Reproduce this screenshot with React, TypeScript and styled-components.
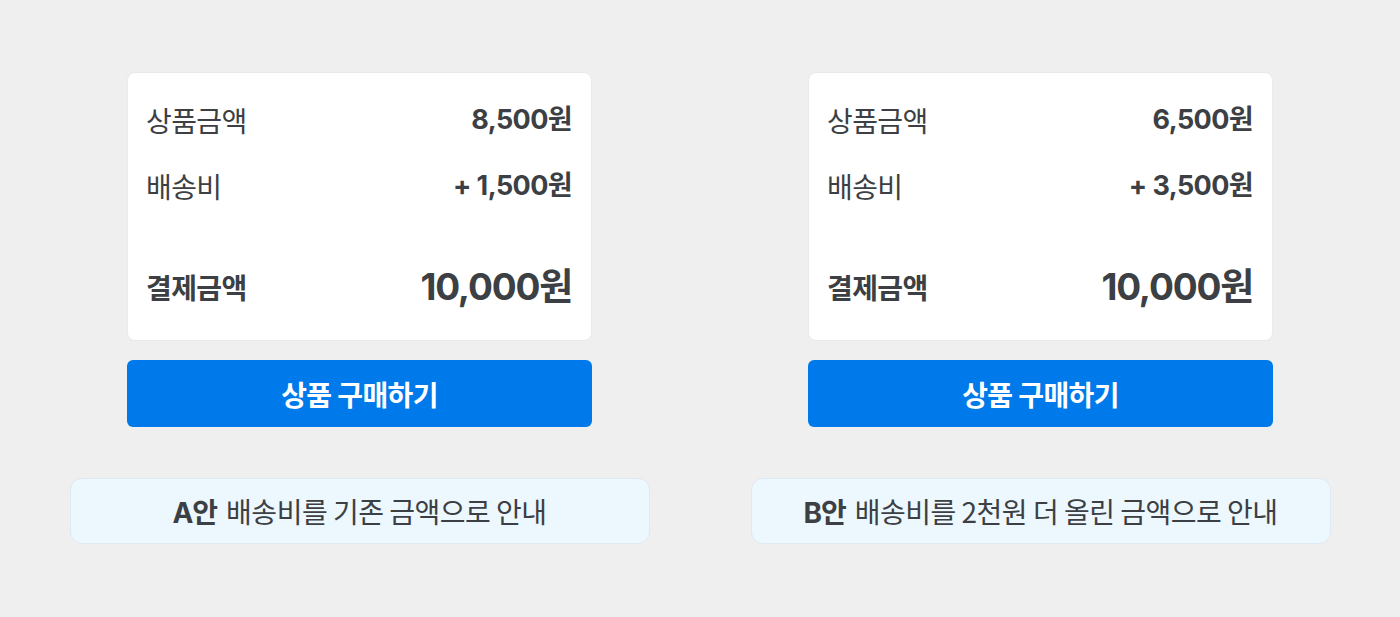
import React from "react";
import styled, { createGlobalStyle } from "styled-components";

const Global = createGlobalStyle`
  html, body { margin: 0; padding: 0; background: #efefef; }
  body { font-family: "Noto Sans CJK KR", "Noto Sans", sans-serif; }
`;

const Page = styled.div`
  width: 1400px;
  height: 617px;
  box-sizing: border-box;
  padding: 73px 19px 0;
  display: grid;
  grid-template-columns: 1fr 1fr;
  background: #efefef;
  color: #3c3f43;
`;

const Column = styled.div`
  display: flex;
  flex-direction: column;
  align-items: center;
`;

const Card = styled.div`
  width: 463px;
  height: 267px;
  box-sizing: border-box;
  background: #ffffff;
  border-radius: 7px;
  box-shadow: 0 0 0 1px #eaeaea;
  padding: 18px 19px 22px 18px;
  display: flex;
  flex-direction: column;
  gap: 6px;
`;

const Row = styled.div<{ $total?: boolean }>`
  height: 60px;
  display: flex;
  align-items: center;
  justify-content: space-between;
  margin-top: ${(p) => (p.$total ? "35px" : "0")};
`;

const Label = styled.span<{ $bold?: boolean }>`
  font-family: "Noto Sans CJK KR", sans-serif;
  font-size: 28px;
  font-weight: ${(p) => (p.$bold ? 700 : 400)};
  letter-spacing: -0.6px;
  line-height: 1;
  margin-top: -3px;
`;

const Value = styled.span<{ $big?: boolean }>`
  font-family: "Inter", "Noto Sans CJK KR", sans-serif;
  font-size: ${(p) => (p.$big ? "37px" : "27px")};
  font-weight: 700;
  letter-spacing: ${(p) => (p.$big ? "-1.2px" : "-0.6px")};
  line-height: 1;
  margin-top: -3px;
`;

const BuyButton = styled.button`
  margin-top: 20px;
  width: 465px;
  height: 67px;
  border: none;
  border-radius: 6px;
  background: #0079ea;
  color: #ffffff;
  font-family: "Noto Sans CJK KR", sans-serif;
  font-size: 28px;
  font-weight: 700;
  letter-spacing: -0.6px;
  display: flex;
  align-items: center;
  justify-content: center;
  padding: 0;
`;

const Note = styled.div`
  margin-top: 51px;
  width: 580px;
  height: 66px;
  box-sizing: border-box;
  background: #edf7fe;
  border: 1px solid #dfe9f1;
  border-radius: 12px;
  display: flex;
  align-items: center;
  justify-content: center;
  font-family: "Noto Sans CJK KR", sans-serif;
  font-size: 28px;
  letter-spacing: -0.5px;
  color: #3c3f43;
`;

const Tag = styled.b`
  font-family: "Inter", "Noto Sans CJK KR", sans-serif;
  font-weight: 700;
  margin-right: 9px;
  letter-spacing: -1px;
`;

type Variant = {
  price: string;
  shipping: string;
  tag: string;
  note: string;
};

const variants: Variant[] = [
  { price: "8,500원", shipping: "+ 1,500원", tag: "A안", note: "배송비를 기존 금액으로 안내" },
  { price: "6,500원", shipping: "+ 3,500원", tag: "B안", note: "배송비를 2천원 더 올린 금액으로 안내" },
];

export default function App() {
  return (
    <>
      <Global />
      <Page>
        {variants.map((v) => (
          <Column key={v.tag}>
            <Card>
              <Row>
                <Label>상품금액</Label>
                <Value>{v.price}</Value>
              </Row>
              <Row>
                <Label>배송비</Label>
                <Value>{v.shipping}</Value>
              </Row>
              <Row $total>
                <Label $bold>결제금액</Label>
                <Value $big>10,000원</Value>
              </Row>
            </Card>
            <BuyButton>상품 구매하기</BuyButton>
            <Note>
              <Tag>{v.tag}</Tag>
              {v.note}
            </Note>
          </Column>
        ))}
      </Page>
    </>
  );
}
